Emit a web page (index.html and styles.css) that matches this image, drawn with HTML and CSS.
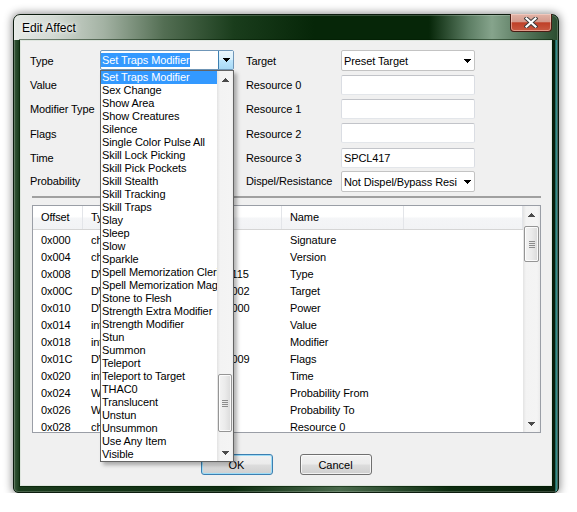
FILE: index.html
```html
<!DOCTYPE html>
<html lang="en">
<head>
    <meta charset="UTF-8">
    <title>Edit Affect</title>
    <link rel="stylesheet" href="styles.css">
</head>
<body>
    <div class="window">
        <div class="titlebar">
            <span class="title">Edit Affect</span>
            <div class="close">
                <svg width="14" height="11" viewBox="0 0 14 11">
                    <path d="M2.5 1.5l9 8M11.5 1.5l-9 8" stroke="#3a3a3a" stroke-width="4" stroke-linecap="square"/>
                    <path d="M2.5 1.5l9 8M11.5 1.5l-9 8" stroke="#fff" stroke-width="2.2" stroke-linecap="square"/>
                </svg>
            </div>
        </div>
        <div class="client">
            <div class="fields">
                <label>Type</label>
                <div class="combo open">
                    <span class="sel">Set Traps Modifier</span>
                    <span class="drop-btn"><svg class="arrow" width="7" height="4" viewBox="0 0 7 4"><path d="M0 0h7v1h-1v1h-1v1h-1v1h-1v-1h-1v-1h-1v-1h-1z"/></svg></span>
                </div>
                <label class="r">Target</label>
                <div class="combo">
                    <span>Preset Target</span>
                    <svg class="arrow" width="7" height="4" viewBox="0 0 7 4"><path d="M0 0h7v1h-1v1h-1v1h-1v1h-1v-1h-1v-1h-1v-1h-1z"/></svg>
                </div>

                <label>Value</label>
                <div class="edit"></div>
                <label class="r">Resource 0</label>
                <div class="edit"></div>

                <label>Modifier Type</label>
                <div class="edit"></div>
                <label class="r">Resource 1</label>
                <div class="edit"></div>

                <label>Flags</label>
                <div class="edit"></div>
                <label class="r">Resource 2</label>
                <div class="edit"></div>

                <label>Time</label>
                <div class="edit"></div>
                <label class="r">Resource 3</label>
                <div class="edit">SPCL417</div>

                <label>Probability</label>
                <div class="edit"></div>
                <label class="r">Dispel/Resistance</label>
                <div class="combo">
                    <span>Not Dispel/Bypass Resi</span>
                    <svg class="arrow" width="7" height="4" viewBox="0 0 7 4"><path d="M0 0h7v1h-1v1h-1v1h-1v1h-1v-1h-1v-1h-1v-1h-1z"/></svg>
                </div>
            </div>

            <div class="sep"></div>

            <div class="listview">
                <div class="lv-main">
                    <div class="lv-head">
                        <div class="col-off">Offset</div>
                        <div class="col-type">Type</div>
                        <div class="col-val">Value</div>
                        <div class="col-name">Name</div>
                        <div class="col-fill"></div>
                    </div>
                    <div class="lv-rows">
                        <div class="lv-row"><span class="col-off">0x000</span><span class="col-type">char</span><span class="col-val">EFF</span><span class="col-name">Signature</span></div>
                        <div class="lv-row"><span class="col-off">0x004</span><span class="col-type">char</span><span class="col-val">V2.0</span><span class="col-name">Version</span></div>
                        <div class="lv-row"><span class="col-off">0x008</span><span class="col-type">DWORD</span><span class="col-val">0x00000115</span><span class="col-name">Type</span></div>
                        <div class="lv-row"><span class="col-off">0x00C</span><span class="col-type">DWORD</span><span class="col-val">0x00000002</span><span class="col-name">Target</span></div>
                        <div class="lv-row"><span class="col-off">0x010</span><span class="col-type">DWORD</span><span class="col-val">0x00000000</span><span class="col-name">Power</span></div>
                        <div class="lv-row"><span class="col-off">0x014</span><span class="col-type">int</span><span class="col-val">0</span><span class="col-name">Value</span></div>
                        <div class="lv-row"><span class="col-off">0x018</span><span class="col-type">int</span><span class="col-val">0</span><span class="col-name">Modifier</span></div>
                        <div class="lv-row"><span class="col-off">0x01C</span><span class="col-type">DWORD</span><span class="col-val">0x00000009</span><span class="col-name">Flags</span></div>
                        <div class="lv-row"><span class="col-off">0x020</span><span class="col-type">int</span><span class="col-val">0</span><span class="col-name">Time</span></div>
                        <div class="lv-row"><span class="col-off">0x024</span><span class="col-type">WORD</span><span class="col-val">100</span><span class="col-name">Probability From</span></div>
                        <div class="lv-row"><span class="col-off">0x026</span><span class="col-type">WORD</span><span class="col-val">0</span><span class="col-name">Probability To</span></div>
                        <div class="lv-row"><span class="col-off">0x028</span><span class="col-type">char</span><span class="col-val"></span><span class="col-name">Resource 0</span></div>
                    </div>
                </div>
                <div class="vscroll">
                    <div class="sb-btn"><svg width="7" height="4" viewBox="0 0 7 4"><path d="M3 0h1v1h1v1h1v1h1v1h-7v-1h1v-1h1v-1h1z"/></svg></div>
                    <div class="sb-track"><div class="thumb lv-thumb"><i></i><i></i><i></i><i></i></div></div>
                    <div class="sb-btn"><svg width="7" height="4" viewBox="0 0 7 4"><path d="M0 0h7v1h-1v1h-1v1h-1v1h-1v-1h-1v-1h-1v-1h-1z"/></svg></div>
                </div>
            </div>

            <div class="buttons">
                <button class="btn default">OK</button>
                <button class="btn">Cancel</button>
            </div>

            <div class="dropdown">
                <ul class="dd-list">
                    <li class="selected">Set Traps Modifier</li>
                    <li>Sex Change</li>
                    <li>Show Area</li>
                    <li>Show Creatures</li>
                    <li>Silence</li>
                    <li>Single Color Pulse All</li>
                    <li>Skill Lock Picking</li>
                    <li>Skill Pick Pockets</li>
                    <li>Skill Stealth</li>
                    <li>Skill Tracking</li>
                    <li>Skill Traps</li>
                    <li>Slay</li>
                    <li>Sleep</li>
                    <li>Slow</li>
                    <li>Sparkle</li>
                    <li>Spell Memorization Cleric</li>
                    <li>Spell Memorization Mage</li>
                    <li>Stone to Flesh</li>
                    <li>Strength Extra Modifier</li>
                    <li>Strength Modifier</li>
                    <li>Stun</li>
                    <li>Summon</li>
                    <li>Teleport</li>
                    <li>Teleport to Target</li>
                    <li>THAC0</li>
                    <li>Translucent</li>
                    <li>Unstun</li>
                    <li>Unsummon</li>
                    <li>Use Any Item</li>
                    <li>Visible</li>
                </ul>
                <div class="vscroll dd-scroll">
                    <div class="sb-btn"><svg width="7" height="4" viewBox="0 0 7 4"><path d="M3 0h1v1h1v1h1v1h1v1h-7v-1h1v-1h1v-1h1z"/></svg></div>
                    <div class="sb-track"><div class="thumb dd-thumb"><i></i><i></i><i></i><i></i></div></div>
                    <div class="sb-btn"><svg width="7" height="4" viewBox="0 0 7 4"><path d="M0 0h7v1h-1v1h-1v1h-1v1h-1v-1h-1v-1h-1v-1h-1z"/></svg></div>
                </div>
            </div>
        </div>
    </div>
</body>
</html>
```

FILE: styles.css
```css
body {
    margin: 0;
    background: #fff;
    font-family: "Liberation Sans", Arial, sans-serif;
    font-size: 11px;
    letter-spacing: -0.1px;
    color: #000;
}
.window {
    margin: 14px 0 0 13px;
    width: 546px;
    height: 479px;
    box-sizing: border-box;
    padding: 0 6px 6px;
    border: 1px solid #0c1c0e;
    border-radius: 7px 7px 5px 5px;
    display: flex;
    flex-direction: column;
    background:
        linear-gradient(90deg, #e6eae6 0, #d2d9d2 40px, #a3b2a3 90px, #536e53 150px, #1a3d1c 220px, #062608 300px, #062608 415px, #5d7e64 455px, #86a48c 478px, #5e7e64 505px, #284a2c 546px) top left / 100% 25px no-repeat,
        linear-gradient(90deg, #3a5a3c, #1b3b1d 5px, #0d2d10 40%, #4a6a4c 60%, #0d2d10 80%, #081e0a calc(100% - 3px), #3fb4b4 calc(100% - 2px), #0a1c0c);
    box-shadow: 0 0 9px 1px rgba(0, 0, 0, 0.45), inset 0 0 0 1px rgba(255, 255, 255, 0.2);
}
.titlebar {
    height: 25px;
    display: flex;
    justify-content: space-between;
    align-items: flex-start;
}
.title {
    margin: 6px 0 0 2px;
    font-size: 12px;
    letter-spacing: 0;
    text-shadow: 0 0 6px #fff, 0 0 3px #fff;
}
.close {
    width: 42px;
    height: 18px;
    margin-top: -1px;
    box-sizing: border-box;
    border: 1px solid #4a1d14;
    border-top: none;
    border-radius: 0 0 4px 4px;
    background: linear-gradient(#e2b4a8 0, #d49a8c 45%, #bf4028 52%, #c85a42 100%);
    box-shadow: inset 0 0 0 1px rgba(255, 220, 210, 0.5);
    display: flex;
    align-items: center;
    justify-content: center;
}
.client {
    position: relative;
    flex: 1;
    background: #f0f0f0;
    border: 1px solid #dfe6df;
    box-shadow: 0 0 0 1px rgba(0, 25, 0, 0.5);
}
.fields {
    display: grid;
    grid-template-columns: 70px 134px 107px 134px;
    grid-template-rows: 21px 20px 20px 21px 19px 20px;
    row-gap: 4px;
    margin: 9px 0 0 9px;
}
.fields label {
    align-self: center;
}
.fields .r {
    padding-left: 12px;
}
.combo {
    height: 21px;
    box-sizing: border-box;
    border: 1px solid #c3c3c3;
    border-radius: 2px;
    background: #fff;
    display: flex;
    align-items: center;
    justify-content: space-between;
    padding: 0 3px 0 2px;
}
.combo.open {
    height: 20px;
    padding: 0;
    border-color: #6f96b8;
}
.combo .sel {
    padding: 0 1px;
    line-height: 14px;
    background: #3399ff;
    color: #fff;
}
.drop-btn {
    width: 15px;
    height: 100%;
    box-sizing: border-box;
    border-left: 1px solid #3c7fb1;
    background: linear-gradient(#eaf6fd, #d9f0fc 50%, #bee6fd 50%, #a7d9f5);
    display: flex;
    align-items: center;
    justify-content: center;
}
.arrow {
    display: block;
}
.edit {
    height: 20px;
    box-sizing: border-box;
    border: 1px solid;
    border-color: #c2c4c9 #dadde3 #e3e6ea #dadde3;
    border-radius: 2px;
    background: #fff;
    padding-left: 2px;
    line-height: 18px;
}
.sep {
    height: 2px;
    margin: 5px 10px 0 11px;
    background: #a0a0a0;
}
.listview {
    margin: 7px 10px 0 11px;
    height: 228px;
    box-sizing: border-box;
    border: 1px solid #9a9ea6;
    background: #fff;
    display: flex;
}
.lv-main {
    flex: 1;
    overflow: hidden;
}
.lv-head {
    height: 24px;
    box-sizing: border-box;
    display: flex;
    border-bottom: 1px solid #d5d5d5;
    background: linear-gradient(#fff 0, #fff 45%, #f4f5f7 55%, #f2f3f5 100%);
}
.lv-head div {
    box-sizing: border-box;
    padding-left: 8px;
    line-height: 23px;
    border-right: 1px solid #e3e5e9;
}
.lv-rows {
    padding-top: 2px;
}
.lv-row {
    display: flex;
    height: 17px;
    line-height: 17px;
}
.lv-row span {
    box-sizing: border-box;
    padding-left: 8px;
    white-space: nowrap;
    overflow: hidden;
}
.lv-row .col-val {
    padding-left: 12px;
}
.col-off { width: 50px; }
.col-type { width: 95px; }
.col-val { width: 104px; }
.col-name { width: 122px; }
.col-fill { flex: 1; }
.vscroll {
    width: 17px;
    display: flex;
    flex-direction: column;
    background: linear-gradient(90deg, #e3e3e3, #f3f3f3 3px, #f4f4f4 14px, #ececec);
}
.sb-btn {
    height: 17px;
    display: flex;
    align-items: center;
    justify-content: center;
    fill: #4a4a4a;
}
.sb-track {
    flex: 1;
}
.thumb {
    margin: 0 1px;
    box-sizing: border-box;
    border: 1px solid #959595;
    border-radius: 2px;
    background: linear-gradient(90deg, #f3f3f3, #ebebeb 50%, #dadada);
    box-shadow: inset 0 0 0 1px rgba(255, 255, 255, 0.8);
    display: flex;
    flex-direction: column;
    align-items: center;
    justify-content: center;
    gap: 1px;
}
.thumb i {
    width: 6px;
    height: 1px;
    background: #8c8c8c;
}
.lv-thumb {
    margin-top: 3px;
    height: 36px;
}
.buttons {
    display: flex;
    justify-content: center;
    gap: 27px;
    margin-top: 21px;
}
.btn {
    width: 72px;
    height: 21px;
    box-sizing: border-box;
    border: 1px solid #707070;
    border-radius: 3px;
    background: linear-gradient(#f2f2f2 0, #ebebeb 48%, #dddddd 52%, #cfcfcf 100%);
    box-shadow: inset 0 0 0 1px rgba(255, 255, 255, 0.7);
    font: inherit;
    color: #000;
    padding: 0;
}
.btn.default {
    border-color: #3c7fb1;
    box-shadow: inset 0 0 0 1px #9edcf6;
}
.dropdown {
    position: absolute;
    left: 79px;
    top: 29px;
    width: 134px;
    height: 392px;
    box-sizing: border-box;
    border: 1px solid #646464;
    background: #fff;
    display: flex;
    box-shadow: 3px 3px 4px rgba(0, 0, 0, 0.3);
}
.dd-list {
    flex: 1;
    margin: 0;
    padding: 0;
    list-style: none;
    overflow: hidden;
}
.dd-list li {
    height: 13px;
    line-height: 13px;
    padding-left: 1px;
    white-space: nowrap;
}
.dd-list li.selected {
    background: #3399ff;
    color: #fff;
}
.dd-scroll {
    width: 16px;
}
.dd-thumb {
    margin-top: 286px;
    height: 58px;
}
```
